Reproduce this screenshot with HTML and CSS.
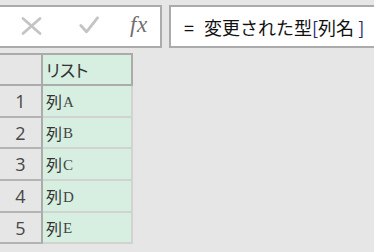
FILE: index.html
```html
<!DOCTYPE html>
<html lang="ja">
<head>
<meta charset="utf-8">
<link rel="stylesheet" href="styles.css">
</head>
<body>
<div class="bar">
  <div class="tools">
    <span class="icon icon-x">
      <svg width="21" height="20" viewBox="0 0 21 20"><path d="M2 2.5 L19 17.5 M19 2.5 L2 17.5" stroke="#c4c4c4" stroke-width="2.8" stroke-linecap="round" fill="none"/></svg>
    </span>
    <span class="icon icon-ok">
      <svg width="20" height="18" viewBox="0 0 20 18"><path d="M1.8 9.5 L7.5 15.8 L18.5 1.8" stroke="#c4c4c4" stroke-width="2.8" stroke-linecap="round" stroke-linejoin="round" fill="none"/></svg>
    </span>
    <span class="fx">fx</span>
  </div>
  <div class="formula"><span class="eq">=</span>変更された型<span class="br">[</span>列名 <span class="br">]</span></div>
</div>
<div class="sheet">
  <div class="row head">
    <div class="rh"></div>
    <div class="cell">リスト</div>
  </div>
  <div class="row r30"><div class="rh">1</div><div class="cell">列<span class="lt">A</span></div></div>
  <div class="row r29"><div class="rh">2</div><div class="cell">列<span class="lt">B</span></div></div>
  <div class="row r30"><div class="rh">3</div><div class="cell">列<span class="lt">C</span></div></div>
  <div class="row r30"><div class="rh">4</div><div class="cell">列<span class="lt">D</span></div></div>
  <div class="row r29"><div class="rh">5</div><div class="cell">列<span class="lt">E</span></div></div>
</div>
</body>
</html>
```
FILE: styles.css
```css
html, body {
  margin: 0;
  padding: 0;
  background: #e6e6e6;
  overflow: hidden;
}
body {
  width: 374px;
  height: 252px;
  font-family: "Noto Sans CJK JP", "Noto Sans", sans-serif;
}
.bar {
  display: flex;
  padding-top: 5px;
  height: 43px;
}
.tools {
  box-sizing: border-box;
  width: 164px;
  margin-left: -2px;
  height: 43px;
  border: 2px solid #ababab;
  background: #fff;
  display: flex;
  align-items: center;
  padding-left: 2px;
}
.icon {
  display: flex;
}
.icon-x {
  margin-left: 19px;
  margin-top: -2px;
}
.icon-ok {
  margin-left: 37px;
  margin-top: -4px;
}
.fx {
  margin-left: 31px;
  margin-top: -4px;
  font-family: "Liberation Serif", serif;
  font-style: italic;
  font-size: 23px;
  color: #6e6e6e;
  letter-spacing: 0.5px;
}
.formula {
  box-sizing: border-box;
  flex: 1;
  margin-left: 7px;
  margin-right: -10px;
  height: 43px;
  border: 2px solid #ababab;
  background: #fff;
  display: flex;
  align-items: center;
  padding-left: 13px;
  font-size: 18px;
  color: #111;
  white-space: pre;
}
.eq {
  margin-right: 10px;
}
.br {
  color: #1b2a6b;
}
.sheet {
  margin-top: 5px;
  width: 133px;
  border-top: 2px solid #ababab;
}
.row {
  display: flex;
}
.rh {
  width: 41px;
  border-right: 2px solid #ababab;
  border-bottom: 2px solid #b3b3b3;
  background: #e6e6e6;
  display: flex;
  align-items: center;
  justify-content: center;
  font-family: "Open Sans", sans-serif;
  font-size: 18px;
  color: #474747;
}
.cell {
  width: 85px;
  padding-left: 3px;
  border-right: 2px solid #d2d2d2;
  border-bottom: 2px solid #d2d2d2;
  background: #d6efe1;
  display: flex;
  align-items: center;
  font-size: 16px;
  color: #333;
}
.head .rh, .head .cell {
  height: 29px;
  border-bottom-color: #ababab;
}
.head .cell {
  border-right-color: #ababab;
  font-feature-settings: "palt";
  font-size: 17px;
}
.r30 .rh, .r30 .cell { height: 30px; }
.r29 .rh, .r29 .cell { height: 29px; }
.lt {
  font-family: "Liberation Serif", serif;
  font-size: 15px;
  color: #444;
  margin-left: 1px;
  position: relative;
  top: 1px;
}
```
